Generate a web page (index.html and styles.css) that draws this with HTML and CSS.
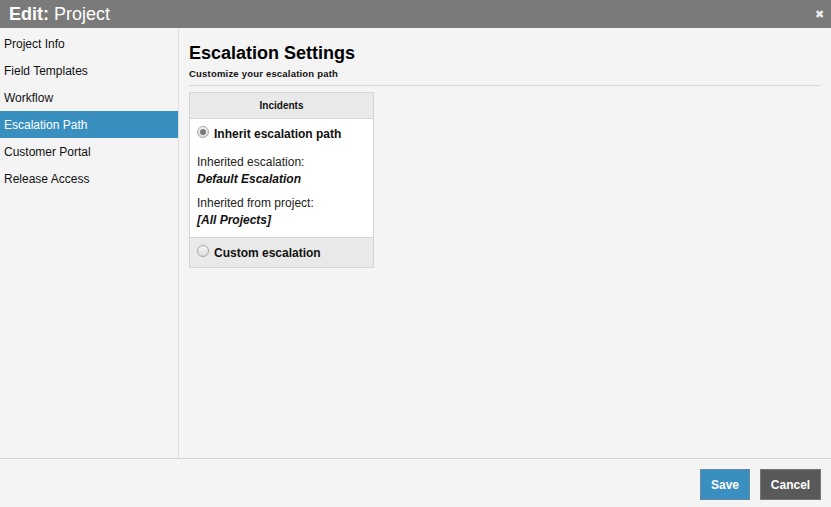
FILE: index.html
```html
<!DOCTYPE html>
<html>
<head>
<meta charset="utf-8">
<link rel="stylesheet" href="styles.css">
</head>
<body>
<div class="dialog">
  <div class="titlebar">
    <div class="title"><b>Edit:</b> Project</div>
    <div class="close">&#10006;</div>
  </div>
  <div class="body">
    <ul class="nav">
      <li>Project Info</li>
      <li>Field Templates</li>
      <li>Workflow</li>
      <li class="active">Escalation Path</li>
      <li>Customer Portal</li>
      <li>Release Access</li>
    </ul>
    <div class="main">
      <h1>Escalation Settings</h1>
      <div class="sub">Customize your escalation path</div>
      <div class="panel">
        <div class="phead">Incidents</div>
        <div class="opt sel">
          <div class="radio-row"><span class="radio on"></span><span class="rlabel">Inherit escalation path</span></div>
          <div class="info">Inherited escalation:</div>
          <div class="val">Default Escalation</div>
          <div class="info second">Inherited from project:</div>
          <div class="val">[All Projects]</div>
        </div>
        <div class="opt alt">
          <div class="radio-row"><span class="radio"></span><span class="rlabel">Custom escalation</span></div>
        </div>
      </div>
    </div>
  </div>
  <div class="footer">
    <button class="btn save">Save</button>
    <button class="btn cancel">Cancel</button>
  </div>
</div>
</body>
</html>
```
FILE: styles.css
```css
* { box-sizing: border-box; }
html, body { margin: 0; padding: 0; }
body {
  font-family: "Liberation Sans", Arial, sans-serif;
  background: #f4f4f4;
  color: #111;
  width: 831px;
  height: 507px;
  overflow: hidden;
}
.dialog { display: flex; flex-direction: column; height: 507px; }
.titlebar {
  height: 28px;
  background: #7a7a7a;
  color: #fff;
  display: flex;
  align-items: center;
  justify-content: space-between;
  padding: 0 7px 0 9px;
}
.title { font-size: 18px; line-height: 28px; }
.title b { font-weight: bold; }
.close { font-size: 11px; color: #eee; margin-top: 1px; }
.body { display: flex; height: 430px; }
.nav {
  list-style: none;
  margin: 0;
  padding: 2px 0 0 0;
  width: 179px;
  border-right: 1px solid #dcdcdc;
  flex: none;
}
.nav li {
  height: 27px;
  line-height: 26px;
  padding-top: 1px;
  font-size: 12px;
  padding-left: 4px;
  color: #111;
}
.nav li.active { background: #3a8fc1; color: #fff; }
.main { flex: 1; padding: 15px 10px 0 10px; }
h1 {
  margin: 0;
  font-size: 18px;
  font-weight: bold;
  line-height: 20px;
  color: #000;
}
.sub {
  font-size: 9.5px;
  font-weight: bold;
  margin-top: 5px;
  padding-bottom: 6px;
  border-bottom: 1px solid #d8d8d8;
  letter-spacing: 0.2px;
}
.panel {
  margin-top: 6px;
  width: 185px;
  border: 1px solid #d4d4d4;
}
.phead {
  background: #e9e9e9;
  height: 26px;
  line-height: 26px;
  text-align: center;
  font-size: 10px;
  font-weight: bold;
  border-bottom: 1px solid #d4d4d4;
}
.opt { padding: 7px 7px 10px 7px; }
.opt.sel { background: #fff; height: 118px; }
.opt.alt { background: #e9e9e9; height: 30px; padding-top: 7px; border-top: 1px solid #d4d4d4; }
.radio-row { display: flex; align-items: center; height: 16px; }
.radio {
  width: 12px; height: 12px;
  border-radius: 50%;
  border: 1px solid #a8a8a8;
  background: linear-gradient(#f6f6f6, #dcdcdc);
  margin-right: 5px;
  margin-top: -4px;
  position: relative;
  flex: none;
}
.radio.on::after {
  content: "";
  position: absolute;
  left: 2px; top: 2px;
  width: 6px; height: 6px;
  border-radius: 50%;
  background: #7a7a7a;
}
.rlabel { font-size: 12px; font-weight: bold; }
.info { font-size: 12px; margin-top: 13px; color: #222; line-height: 14px; }
.info.second { margin-top: 9px; }
.val { font-size: 12px; font-weight: bold; font-style: italic; line-height: 16px; margin-top: 2px; }
.footer {
  height: 49px;
  border-top: 1px solid #d6d6d6;
  display: flex;
  justify-content: flex-end;
  align-items: flex-start;
  padding: 10px 10px 0 0;
  gap: 10px;
}
.btn {
  height: 31px;
  border: 1px solid #888;
  color: #fff;
  font-family: "Liberation Sans", Arial, sans-serif;
  font-weight: bold;
  font-size: 12px;
  padding: 0;
}
.save { width: 50px; background: #3a8fc1; border-color: #6b8899; }
.cancel { width: 61px; background: #595959; border-color: #777; }
```
